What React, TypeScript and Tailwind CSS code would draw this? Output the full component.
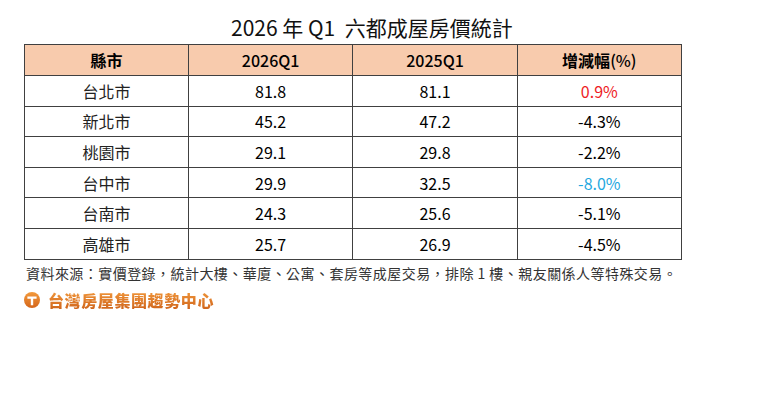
import React from "react";

const rows: { city: string; a: string; b: string; c: string; color?: string }[] = [
  { city: "台北市", a: "81.8", b: "81.1", c: "0.9%", color: "text-[#ee1c25]" },
  { city: "新北市", a: "45.2", b: "47.2", c: "-4.3%" },
  { city: "桃園市", a: "29.1", b: "29.8", c: "-2.2%" },
  { city: "台中市", a: "29.9", b: "32.5", c: "-8.0%", color: "text-[#1fa8e0]" },
  { city: "台南市", a: "24.3", b: "25.6", c: "-5.1%" },
  { city: "高雄市", a: "25.7", b: "26.9", c: "-4.5%" },
];

const font = { fontFamily: '"Noto Sans CJK TC", "Noto Sans", sans-serif' };

export default function App() {
  return (
    <div className="w-[780px] h-[406px] bg-white text-black" style={font}>
      <div className="pt-[13px] pl-[231px] text-[21px] leading-[28px] font-normal text-[#111]">
        2026 年 Q1&nbsp;&nbsp;六都成屋房價統計
      </div>
      <div className="pl-[24px] pt-[3px]">
        <table className="border-collapse w-[658px] table-fixed text-[16px]">
          <thead>
            <tr className="h-[31px] bg-[#f8cbad]">
              <th className="border border-[#404040] font-bold p-0 leading-none w-[164px]">縣市</th>
              <th className="border border-[#404040] font-medium p-0 leading-none">2026Q1</th>
              <th className="border border-[#404040] font-medium p-0 leading-none">2025Q1</th>
              <th className="border border-[#404040] font-medium p-0 leading-none">
                <span className="font-bold">增減幅</span>(%)
              </th>
            </tr>
          </thead>
          <tbody>
            {rows.map((r) => (
              <tr key={r.city} className="h-[30.6px]">
                <td className="border border-[#404040] text-center p-0 leading-none text-[#222]">{r.city}</td>
                <td className="border border-[#404040] text-center p-0 leading-none">{r.a}</td>
                <td className="border border-[#404040] text-center p-0 leading-none">{r.b}</td>
                <td className={`border border-[#404040] text-center p-0 leading-none ${r.color ?? ""}`}>{r.c}</td>
              </tr>
            ))}
          </tbody>
        </table>
      </div>
      <div className="pl-[26px] pt-[3px] text-[14px] leading-[20px] text-[#333] tracking-[0.45px]">
        資料來源：實價登錄，統計大樓、華廈、公寓、套房等成屋交易，排除 1 樓、親友關係人等特殊交易。
      </div>
      <div className="pl-[24px] pt-[8px] flex items-center gap-[8px]">
        <svg width="16" height="16" viewBox="0 0 16 16">
          <defs>
            <linearGradient id="lg" x1="0" y1="0" x2="0" y2="1">
              <stop offset="0" stopColor="#f39a3c" />
              <stop offset="1" stopColor="#d4651a" />
            </linearGradient>
          </defs>
          <circle cx="8" cy="8" r="8" fill="url(#lg)" />
          <path d="M3.4 4.4 H12.6 V6.7 H9.2 V13.2 H6.8 V6.7 H3.4 Z" fill="#fff" />
        </svg>
        <span className="text-[16px] leading-[18px] font-black tracking-[0.6px] bg-gradient-to-b from-[#f0963a] to-[#d0661c] bg-clip-text text-transparent">
          台灣房屋集團趨勢中心
        </span>
      </div>
    </div>
  );
}
